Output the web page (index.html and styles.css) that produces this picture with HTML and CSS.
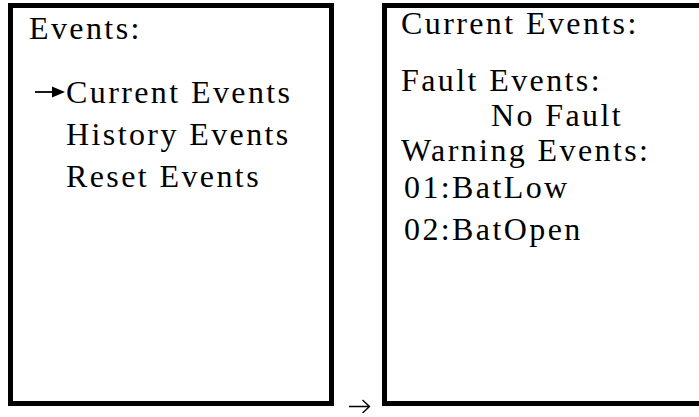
FILE: index.html
```html
<!DOCTYPE html>
<html lang="en">
<head>
    <meta charset="UTF-8">
    <meta name="viewport" content="width=device-width, initial-scale=1.0">
    <title>Events Menu</title>
    <link rel="stylesheet" href="styles.css">
</head>
<body>
    <div class="page">
        <!-- Menu screen -->
        <section class="screen screen-menu">
            <div class="title">Events:</div>
            <ul class="menu">
                <li class="item"><span class="marker"><svg width="30" height="14" viewBox="0 0 30 14"><line x1="0" y1="7" x2="20" y2="7" stroke="#000" stroke-width="1.8"/><polygon points="17,1.5 30,7 17,12.5" fill="#000"/></svg></span><span>Current Events</span></li>
                <li class="item"><span class="marker"></span><span>History Events</span></li>
                <li class="item"><span class="marker"></span><span>Reset Events</span></li>
            </ul>
        </section>

        <div class="step">
            <svg width="22" height="14" viewBox="0 0 22 14">
                <path d="M0 7.5 H20.5 M13.5 1 L20.5 7.5 L13.5 14" fill="none" stroke="#000" stroke-width="1.4"/>
            </svg>
        </div>

        <!-- Current events screen -->
        <section class="screen screen-detail">
            <div class="row row-head">Current Events:</div>
            <div class="row row-fault">Fault Events:</div>
            <div class="row indent">No Fault</div>
            <div class="row">Warning Events:</div>
            <div class="row code first-code">01:BatLow</div>
            <div class="row code second-code">02:BatOpen</div>
        </section>
    </div>
</body>
</html>
```

FILE: styles.css
```css
/* Reset CSS */
* {
    margin: 0;
    padding: 0;
    box-sizing: border-box;
}

html, body {
    height: 100%;
    overflow: hidden;
}

body {
    background-color: #fff;
    color: #000;
    font-family: 'Liberation Serif', 'Times New Roman', serif;
    font-size: 32px;
    letter-spacing: 2.4px;
}

.page {
    display: flex;
    height: 411px;
    margin-top: 3px;
    padding-left: 8px;
}

.screen {
    align-self: flex-start;
    height: 403px;
    border: 5px solid #000;
    background-color: #fff;
    flex-shrink: 0;
    overflow: hidden;
}

.screen-menu {
    width: 326px;
    padding-left: 16px;
    line-height: 42px;
}

    .screen-menu .title {
        margin-top: -1px;
    }

.menu {
    list-style: none;
    margin-top: 22px;
}

    .menu .item {
        display: flex;
        align-items: center;
        margin-left: 6px;
        white-space: nowrap;
    }

.marker {
    display: flex;
    align-items: center;
    width: 31px;
    height: 42px;
    flex-shrink: 0;
}

.step {
    align-self: flex-end;
    width: 48px;
    flex-shrink: 0;
    display: flex;
    padding-left: 15px;
    padding-bottom: 1px;
}

.screen-detail {
    width: 340px;
    padding-left: 14px;
    line-height: 35px;
}

    .screen-detail .row {
        white-space: nowrap;
    }

    .screen-detail .row-head {
        margin-top: -2px;
    }

    .screen-detail .row-fault {
        margin-top: 22px;
    }

    .screen-detail .indent {
        padding-left: 90px;
    }

    .screen-detail .code {
        margin-left: 3px;
    }

    .screen-detail .first-code {
        margin-top: 2px;
    }

    .screen-detail .second-code {
        margin-top: 7px;
    }
```
